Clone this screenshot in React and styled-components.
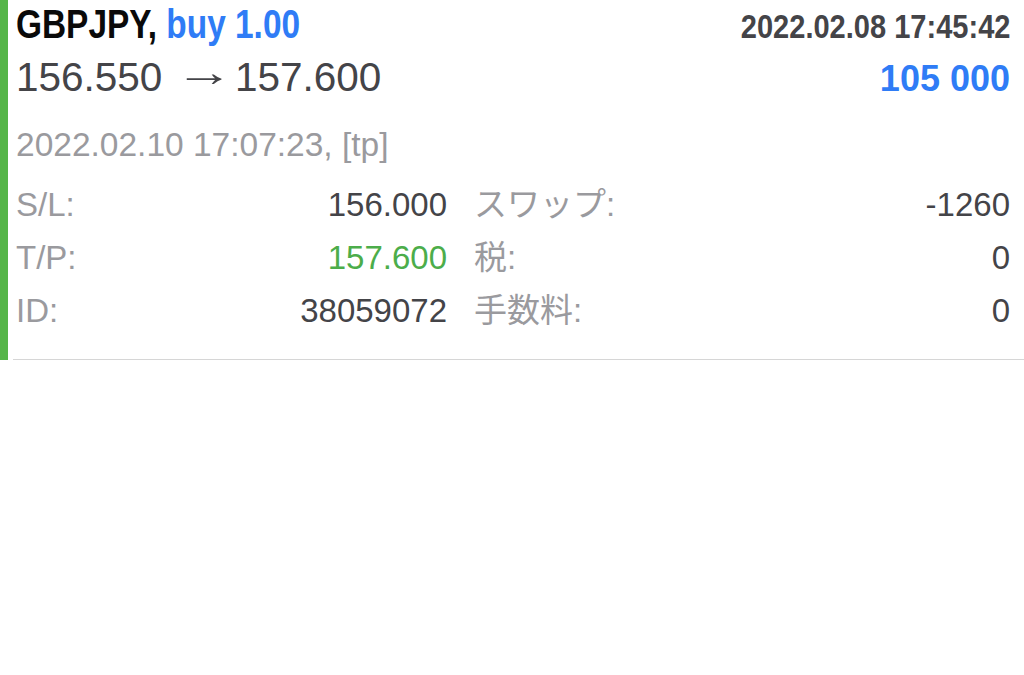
import React from 'react';
import styled, { createGlobalStyle } from 'styled-components';

const GlobalStyle = createGlobalStyle`
  body {
    margin: 0;
    background: #ffffff;
    font-family: "Liberation Sans", Arial, sans-serif;
  }
`;

const Card = styled.div`
  display: flex;
`;

const Stripe = styled.div`
  width: 8px;
  flex-shrink: 0;
  background: #55b548;
`;

const Body = styled.div`
  flex: 1;
  margin-left: 5px;
  padding: 0 14px 22px 3px;
  border-bottom: 1px solid #d6d6d6;
`;

const Row = styled.div`
  display: flex;
  justify-content: space-between;
  align-items: baseline;
  height: ${p => p.h}px;
  line-height: ${p => p.h}px;
  margin-top: ${p => p.top || 0}px;
`;

const Condensed = styled.span`
  display: inline-block;
  font-weight: bold;
  font-size: ${p => p.size}px;
  color: ${p => p.color || '#0a0a0a'};
  transform: scaleX(${p => p.squeeze});
  transform-origin: ${p => (p.right ? 'right' : 'left')} center;
  white-space: pre;
`;

const Accent = styled.span`
  color: #2f7cf6;
`;

const Price = styled.span`
  font-size: ${p => p.size}px;
  color: ${p => p.color || '#444448'};
`;

const Arrow = styled.span`
  display: inline-block;
  margin: 0 19px 0 13px;
  transform: translateY(-5px) scaleX(1.45);
  transform-origin: left center;
`;

const Details = styled.div`
  display: grid;
  grid-template-columns: 431px 1fr;
  column-gap: 27px;
  margin-top: 2px;
`;

const Pair = styled.div`
  display: flex;
  justify-content: space-between;
  height: 53px;
  line-height: 53px;
  font-size: 33px;
`;

const Label = styled.span`
  color: #9a9a9e;
  font-family: "Liberation Sans", "Noto Sans CJK JP", sans-serif;
`;

const Value = styled.span`
  color: ${p => p.color || '#444448'};
`;

const details = [
  ['S/L:', '156.000', null, 'スワップ:', '-1260'],
  ['T/P:', '157.600', '#4cad4a', '税:', '0'],
  ['ID:', '38059072', null, '手数料:', '0'],
];

export default function App() {
  return (
    <>
      <GlobalStyle />
      <Card>
        <Stripe />
        <Body>
          <Row h={48}>
            <Condensed size={40} squeeze={0.835}>
              GBPJPY, <Accent>buy 1.00</Accent>
            </Condensed>
            <Condensed size={33} squeeze={0.88} color="#444448" right>
              2022.02.08 17:45:42
            </Condensed>
          </Row>
          <Row h={58}>
            <Price size={40.5}>
              156.550<Arrow>→</Arrow>157.600
            </Price>
            <Condensed size={36} squeeze={1} color="#2f7cf6" right>
              105 000
            </Condensed>
          </Row>
          <Row h={62} top={8}>
            <Price size={33.5} color="#9a9a9e">2022.02.10 17:07:23, [tp]</Price>
          </Row>
          <Details>
            {details.map(([l1, v1, c1, l2, v2]) => (
              <React.Fragment key={l1}>
                <Pair>
                  <Label>{l1}</Label>
                  <Value color={c1}>{v1}</Value>
                </Pair>
                <Pair>
                  <Label>{l2}</Label>
                  <Value>{v2}</Value>
                </Pair>
              </React.Fragment>
            ))}
          </Details>
        </Body>
      </Card>
    </>
  );
}
